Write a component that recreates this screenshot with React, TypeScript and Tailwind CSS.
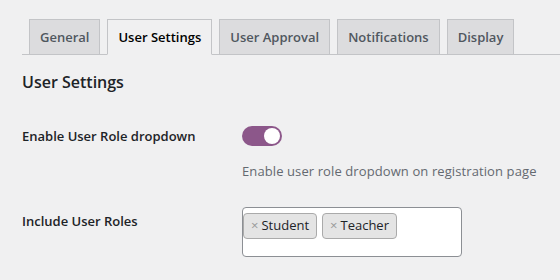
import React from "react";

const tabs = ["General", "User Settings", "User Approval", "Notifications", "Display"];

export default function App() {
  return (
    <div
      className="w-[560px] h-[280px] overflow-hidden bg-[#f0f0f1] text-[#1d2327]"
      style={{ fontFamily: '"Open Sans", "Noto Sans", sans-serif' }}
    >
      <div className="pt-[19px] ml-[22px]">
        <div className="flex border-b border-[#c3c4c7] pl-[7px] gap-[7px]">
          {tabs.map((t, i) => {
            const active = i === 1;
            return (
              <div
                key={t}
                className={
                  active
                    ? "-mb-px border border-[#c3c4c7] border-b-[#f0f0f1] bg-[#f0f0f1] px-[10px] py-[5px] text-[13px] leading-[24px] font-semibold text-black"
                    : "-mb-px border border-[#c3c4c7] bg-[#dcdcde] px-[10px] py-[5px] text-[13px] leading-[24px] font-semibold text-[#50575e]"
                }
              >
                {t}
              </div>
            );
          })}
        </div>
        <h2 className="mt-[15px] text-[16px] leading-[24px] font-semibold text-[#1d2327]">User Settings</h2>
        <div className="mt-[32px] flex">
          <div className="w-[220px] text-[13px] leading-[20px] font-semibold">Enable User Role dropdown</div>
          <div>
            <div className="relative w-[40px] h-[20px] rounded-full bg-[#8c578a]">
              <div className="absolute right-[2px] top-[2px] w-[16px] h-[16px] rounded-full bg-white" />
            </div>
            <div className="mt-[15px] text-[13px] leading-[20px] tracking-[0.1px] text-[#646970]">
              Enable user role dropdown on registration page
            </div>
          </div>
        </div>
        <div className="mt-[26px] flex">
          <div className="w-[220px] pt-[4px] text-[13px] leading-[20px] font-semibold">Include User Roles</div>
          <div className="w-[220px] h-[50px] rounded-[4px] border border-[#8c8f94] bg-white pt-[5px] flex items-start gap-[5px]">
            {["Student", "Teacher"].map((r) => (
              <div
                key={r}
                className="flex items-center h-[26px] rounded-[4px] border border-[#aaaaaa] bg-[#e4e4e4] pl-[7px] pr-[7px] text-[13px] text-[#1d2327]"
              >
                <span className="mr-[3px] text-[#999] text-[13px]">×</span>
                {r}
              </div>
            ))}
          </div>
        </div>
      </div>
    </div>
  );
}
